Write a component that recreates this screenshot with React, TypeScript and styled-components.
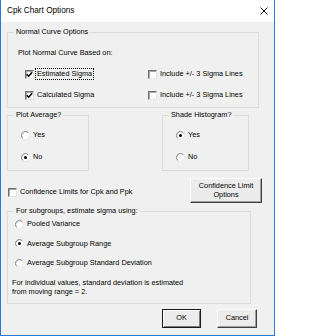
import styled, { createGlobalStyle, css } from "styled-components";

const GlobalStyle = createGlobalStyle`
  * {
    box-sizing: border-box;
  }
  body {
    margin: 0;
    background: #fff;
    font-family: "Liberation Sans", Arial, sans-serif;
  }
`;

const Window = styled.div`
  width: 275px;
  height: 336px;
  display: flex;
  flex-direction: column;
  border: 1px solid #2b79d4;
  border-top: none;
  background: #f0f0f0;
  color: #000;
  font-size: 7.3px;
  line-height: 12px;
`;

const TitleBar = styled.div`
  height: 22px;
  flex-shrink: 0;
  display: flex;
  align-items: center;
  justify-content: space-between;
  padding: 0 6px;
  background: #fff;
  font-size: 8.2px;
`;

const Body = styled.div`
  flex: 1;
  display: flex;
  flex-direction: column;
  padding: 5px 15px 0 6px;
`;

const GroupBox = styled.fieldset<{ $w: number; $h: number; $top?: number }>`
  margin: ${(p) => p.$top ?? 0}px 0 0;
  padding: 0;
  min-width: 0;
  width: ${(p) => p.$w}px;
  height: ${(p) => p.$h}px;
  border: 1px solid #dcdcdc;
`;

const Legend = styled.legend`
  margin-left: 6px;
  padding: 0 2px;
  line-height: 10px;
`;

const CurveContent = styled.div`
  padding: 10px 0 0 10px;
`;

const CheckGrid = styled.div`
  display: grid;
  grid-template-columns: 123px auto;
  row-gap: 9px;
  margin: 9px 0 0 7px;
`;

const GroupRow = styled.div`
  display: grid;
  grid-template-columns: 82px 87px;
  column-gap: 73px;
  margin-top: 2px;
`;

const RadioStack = styled.div<{ $pad: string; $gap: number }>`
  display: flex;
  flex-direction: column;
  align-items: flex-start;
  gap: ${(p) => p.$gap}px;
  padding: ${(p) => p.$pad};
`;

const ConfidenceRow = styled.div`
  display: grid;
  grid-template-columns: 183px 72px;
  align-items: center;
  margin-top: 7px;
`;

const Note = styled.p`
  margin: 8.5px 0 0 4px;
  line-height: 9px;
`;

const Footer = styled.div`
  display: flex;
  justify-content: flex-end;
  gap: 16px;
  margin-top: 5px;
  padding-right: 2px;
`;

const Label = styled.label<{ $shift?: number }>`
  display: inline-flex;
  align-items: center;
  gap: 3px;
  height: 12px;
  white-space: nowrap;
  margin-left: ${(p) => p.$shift ?? 0}px;
  margin-top: ${(p) => (p.$shift ? 3 : 0)}px;
`;

const Caption = styled.span<{ $focus?: boolean }>`
  ${(p) =>
    p.$focus &&
    css`
      border: 1px dotted #000;
      padding: 0 1px;
      margin-left: -2px;
      line-height: 10px;
    `}
`;

const CheckBox = styled.span`
  width: 9px;
  height: 9px;
  display: inline-flex;
  align-items: center;
  justify-content: center;
  background: #fff;
  border: 1px solid;
  border-color: #707070 #e3e3e3 #e3e3e3 #707070;
  box-shadow: inset 1px 1px #a8a8a8;
`;

const Button = styled.button<{ $w: number; $h: number; $default?: boolean }>`
  width: ${(p) => p.$w}px;
  height: ${(p) => p.$h}px;
  padding: 0;
  font: inherit;
  line-height: 8.5px;
  color: #000;
  background: #ececec;
  border: 1px solid;
  border-color: #fff #404040 #404040 #fff;
  box-shadow: inset -1px -1px #a0a0a0;
  ${(p) =>
    p.$default &&
    css`
      border-color: #1a1a1a;
      box-shadow: inset 1px 1px #fff, inset -1px -1px #7a7a7a;
    `}
`;

function Check({ checked, label, focus }: { checked?: boolean; label: string; focus?: boolean }) {
  return (
    <Label>
      <CheckBox>
        {checked && (
          <svg width="7" height="7" viewBox="0 0 7 7">
            <path d="M0.8 3.2 L2.6 5.2 L6.2 1.2" stroke="#000" strokeWidth="1.5" fill="none" />
          </svg>
        )}
      </CheckBox>
      <Caption $focus={focus}>{label}</Caption>
    </Label>
  );
}

function Radio({ checked, label }: { checked?: boolean; label: string }) {
  return (
    <Label>
      <svg width="9" height="9" viewBox="0 0 9 9">
        <circle cx="4.5" cy="4.5" r="4" fill="#fff" />
        <path d="M1.67 7.33 A4 4 0 0 1 7.33 1.67" stroke="#7a7a7a" fill="none" />
        <path d="M7.33 1.67 A4 4 0 0 1 1.67 7.33" stroke="#e3e3e3" fill="none" />
        {checked && <circle cx="4.5" cy="4.5" r="1.5" fill="#000" />}
      </svg>
      <span>{label}</span>
    </Label>
  );
}

export default function App() {
  return (
    <>
      <GlobalStyle />
      <Window>
        <TitleBar>
          <span>Cpk Chart Options</span>
          <svg width="8" height="8" viewBox="0 0 8 8">
            <path d="M0.5 0.5 L7.5 7.5 M7.5 0.5 L0.5 7.5" stroke="#000" strokeWidth="0.9" />
          </svg>
        </TitleBar>
        <Body>
          <GroupBox $w={252} $h={81}>
            <Legend>Normal Curve Options</Legend>
            <CurveContent>
              <div>Plot Normal Curve Based on:</div>
              <CheckGrid>
                <Check checked focus label="Estimated Sigma" />
                <Check label="Include +/- 3 Sigma Lines" />
                <Check checked label="Calculated Sigma" />
                <Check label="Include +/- 3 Sigma Lines" />
              </CheckGrid>
            </CurveContent>
          </GroupBox>

          <GroupRow>
            <GroupBox $w={82} $h={61}>
              <Legend>Plot Average?</Legend>
              <RadioStack $pad="9px 0 0 13px" $gap={10}>
                <Radio label="Yes" />
                <Radio checked label="No" />
              </RadioStack>
            </GroupBox>
            <GroupBox $w={87} $h={61}>
              <Legend>Shade Histogram?</Legend>
              <RadioStack $pad="9px 0 0 13px" $gap={10}>
                <Radio checked label="Yes" />
                <Radio label="No" />
              </RadioStack>
            </GroupBox>
          </GroupRow>

          <ConfidenceRow>
            <Label $shift={1}>
              <CheckBox />
              <span>Confidence Limits for Cpk and Ppk</span>
            </Label>
            <Button $w={72} $h={25}>
              Confidence Limit
              <br />
              Options
            </Button>
          </ConfidenceRow>

          <GroupBox $w={244} $h={98} $top={3}>
            <Legend>For subgroups, estimate sigma using:</Legend>
            <RadioStack $pad="2px 0 0 7px" $gap={7.5}>
              <Radio label="Pooled Variance" />
              <Radio checked label="Average Subgroup Range" />
              <Radio label="Average Subgroup Standard Deviation" />
            </RadioStack>
            <Note>
              For individual values, standard deviation is estimated
              <br />
              from moving range = 2.
            </Note>
          </GroupBox>

          <Footer>
            <Button $w={39} $h={19} $default>
              OK
            </Button>
            <Button $w={40} $h={19}>
              Cancel
            </Button>
          </Footer>
        </Body>
      </Window>
    </>
  );
}
